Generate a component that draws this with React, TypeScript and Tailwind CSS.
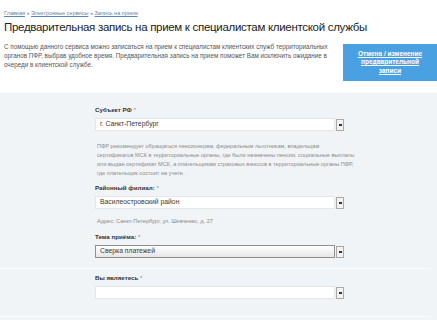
import React from "react";

function SelectBox({ value, focused }: { value?: string; focused?: boolean }) {
  return (
    <div className="flex items-center gap-[1px] h-[13px]">
      <div
        className={`flex-1 h-full flex items-center pl-[4px] text-[6.8px] text-[#3a3a3a] border ${
          focused ? "border-[#8f8f8f] bg-gradient-to-b from-white to-[#e6e6e6]" : "bg-white border-[#e4e7ea]"
        }`}
      >
        {value}
      </div>
      <div className="w-[8px] h-[12px] border border-[#a9a9a9] bg-[#f2f2f2] flex items-center justify-center">
        <div className="w-[3px] h-[2px] bg-[#333]" />
      </div>
    </div>
  );
}

function Label({ children }: { children: React.ReactNode }) {
  return (
    <div className="text-[6.2px] font-bold text-[#333] leading-[8px] mb-[4px]">
      {children} <span className="font-normal text-[#888]">*</span>
    </div>
  );
}

export default function App() {
  return (
    <div className="w-[437px] h-[320px] overflow-hidden bg-white font-['Liberation_Sans',Arial,sans-serif]">
      {/* Header */}
      <div className="px-[4px] pt-[9px]">
        <div className="text-[5.5px] text-[#5a87b5] leading-[8px]">
          <span className="underline">Главная</span> » <span className="underline">Электронные сервисы</span> »{" "}
          <span className="underline">Запись на прием</span>
        </div>
        <h1 className="mt-[3px] text-[11.5px] leading-[14px] text-[#222] tracking-[-0.3px] whitespace-nowrap">
          Предварительная запись на прием к специалистам клиентской службы
        </h1>
      </div>

      <div className="flex justify-between mt-[7.5px] h-[51.5px]">
        <p className="pl-[4px] text-[6.3px] leading-[9px] text-[#555] whitespace-nowrap">
          С помощью данного сервиса можно записаться на прием к специалистам клиентских служб территориальных
          <br />
          органов ПФР, выбрав удобное время. Предварительная запись на прием поможет Вам исключить ожидание в
          <br />
          очереди в клиентской службе.
        </p>
        <div className="w-[94px] h-[37px] mt-[2.5px] bg-[#4aa1e2] flex flex-col items-center justify-center text-white text-[6.5px] font-bold leading-[8.5px]">
          <span className="underline">Отмена / изменение</span>
          <span className="underline">предварительной</span>
          <span className="underline">записи</span>
        </div>
      </div>

      {/* Form panel */}
      <div className="bg-[#f1f4f7] h-[227px]">
        <div className="mr-[7px] pt-[13px] pb-[10px] border-b border-[#fafbfc]">
          <div className="ml-[95px] w-[249px]">
            <Label>Субъект РФ</Label>
            <SelectBox value="г. Санкт-Петербург" />
            <p className="mt-[11px] pl-[2px] text-[5.6px] leading-[9px] text-[#8a8a8a] whitespace-nowrap">
              ПФР рекомендует обращаться пенсионерам, федеральным льготникам, владельцам
              <br />
              сертификатов МСК в территориальные органы, где были назначены пенсии, социальные выплаты
              <br />
              или выдан сертификат МСК, а плательщикам страховых взносов в территориальные органы ПФР,
              <br />
              где плательщик состоит на учете.
            </p>
            <div className="mt-[6px]">
              <Label>Районный филиал:</Label>
              <SelectBox value="Василеостровский район" />
            </div>
            <p className="mt-[8px] pl-[2px] text-[5.6px] leading-[8px] text-[#8a8a8a]">
              Адрес: Санкт-Петербург, ул. Шевченко, д. 27
            </p>
            <div className="mt-[8px]">
              <Label>Тема приёма:</Label>
              <SelectBox value="Сверка платежей" focused />
            </div>
          </div>
        </div>
        <div className="mr-[7px] pt-[5px] pb-[17px] border-b border-[#fafbfc]">
          <div className="ml-[95px] w-[249px]">
            <Label>Вы являетесь</Label>
            <SelectBox />
          </div>
        </div>
      </div>
    </div>
  );
}
